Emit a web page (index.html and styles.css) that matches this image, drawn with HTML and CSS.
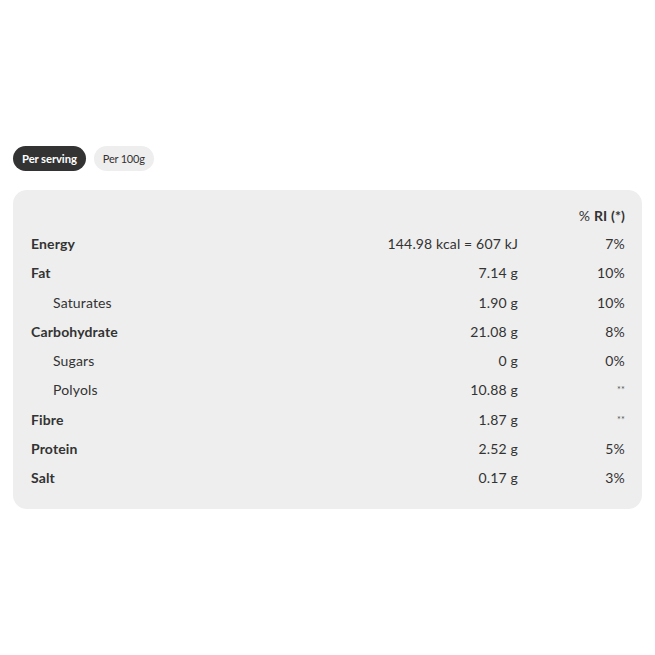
FILE: index.html
```html
<!DOCTYPE html>
<html>
<head>
<meta charset="utf-8">
<link rel="stylesheet" href="styles.css">
</head>
<body>
<div class="page">
  <div class="tabs">
    <span class="pill active">Per serving</span>
    <span class="pill">Per 100g</span>
  </div>
  <div class="card">
    <div class="row head"><span class="name"></span><span class="val"></span><span class="ri">% <b>RI (*)</b></span></div>
    <div class="row"><span class="name bold">Energy</span><span class="val">144.98 kcal = 607 kJ</span><span class="ri">7%</span></div>
    <div class="row"><span class="name bold">Fat</span><span class="val">7.14 g</span><span class="ri">10%</span></div>
    <div class="row"><span class="name sub">Saturates</span><span class="val">1.90 g</span><span class="ri">10%</span></div>
    <div class="row"><span class="name bold">Carbohydrate</span><span class="val">21.08 g</span><span class="ri">8%</span></div>
    <div class="row"><span class="name sub">Sugars</span><span class="val">0 g</span><span class="ri">0%</span></div>
    <div class="row"><span class="name sub">Polyols</span><span class="val">10.88 g</span><span class="ri star">**</span></div>
    <div class="row"><span class="name bold">Fibre</span><span class="val">1.87 g</span><span class="ri star">**</span></div>
    <div class="row"><span class="name bold">Protein</span><span class="val">2.52 g</span><span class="ri">5%</span></div>
    <div class="row"><span class="name bold">Salt</span><span class="val">0.17 g</span><span class="ri">3%</span></div>
  </div>
</div>
</body>
</html>
```
FILE: styles.css
```css
html, body {
  margin: 0;
  padding: 0;
  background: #ffffff;
}
body {
  font-family: Lato, "Open Sans", sans-serif;
  color: #333333;
}
.page {
  padding: 146px 13px 0 13px;
}
.tabs {
  display: flex;
  gap: 8px;
  height: 25px;
}
.pill {
  display: flex;
  align-items: center;
  justify-content: center;
  height: 25px;
  border-radius: 13px;
  font-size: 11px;
  padding: 0 9px 1px 9px;
  box-sizing: border-box;
  background: #eeeeee;
  color: #333333;
  letter-spacing: -0.2px;
}
.pill.active {
  background: #333333;
  color: #ffffff;
  font-weight: 700;
  font-size: 11.3px;
  letter-spacing: -0.1px;
}
.card {
  margin-top: 19px;
  width: 629px;
  box-sizing: border-box;
  background: #eeeeee;
  border-radius: 14px;
  padding: 11px 17px 17px 18px;
}
.row {
  display: grid;
  grid-template-columns: 1fr auto 107px;
  align-items: center;
  height: 29.25px;
  font-size: 14px;
  letter-spacing: 0.15px;
}
.row.head {
  height: 28px;
}
.name.bold {
  font-weight: 700;
}
.name.sub {
  padding-left: 22px;
}
.val {
  text-align: right;
}
.ri {
  text-align: right;
}
.ri b {
  font-weight: 700;
}
.star {
  font-size: 9px;
  color: #555555;
  align-self: center;
}
```
